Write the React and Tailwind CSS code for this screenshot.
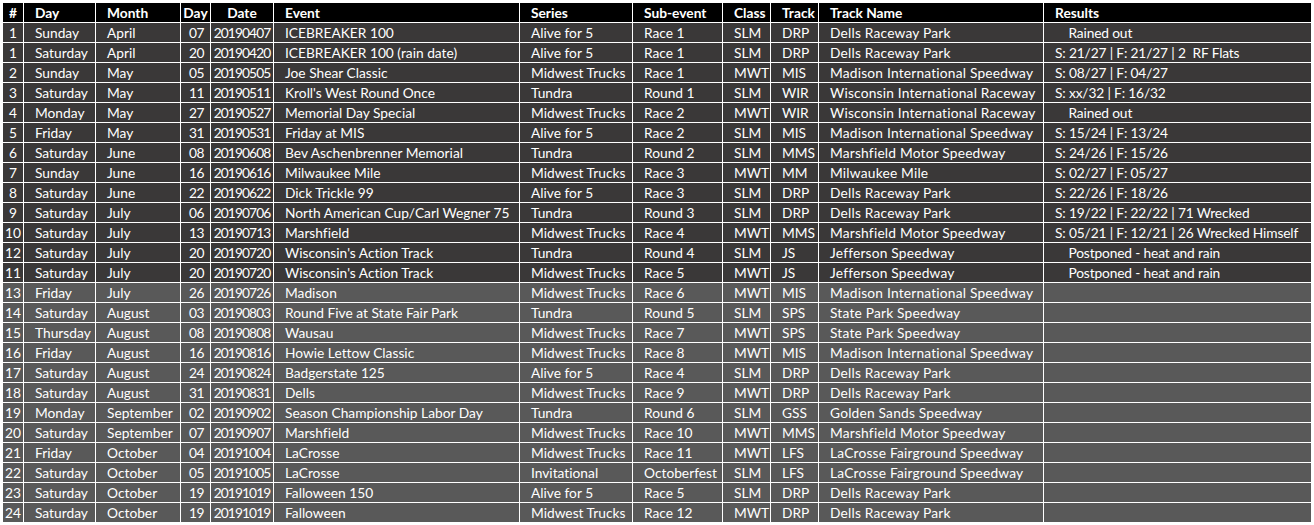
import React from "react";

const headers = ["#", "Day", "Month", "Day", "Date", "Event", "Series", "Sub-event", "Class", "Track", "Track Name", "Results"];

const DRP = ["SLM", "DRP", "Dells Raceway Park"];
const MIS = ["MWT", "MIS", "Madison International Speedway"];
const WIR = ["MWT", "WIR", "Wisconsin International Raceway"];
const MMS = ["MWT", "MMS", "Marshfield Motor Speedway"];

const rows = [
  ["1", "Sunday", "April", "07", "20190407", "ICEBREAKER 100", "Alive for 5", "Race 1", ...DRP, "    Rained out"],
  ["1", "Saturday", "April", "20", "20190420", "ICEBREAKER 100 (rain date)", "Alive for 5", "Race 1", ...DRP, "S: 21/27 | F: 21/27 | 2  RF Flats"],
  ["2", "Sunday", "May", "05", "20190505", "Joe Shear Classic", "Midwest Trucks", "Race 1", ...MIS, "S: 08/27 | F: 04/27"],
  ["3", "Saturday", "May", "11", "20190511", "Kroll's West Round Once", "Tundra", "Round 1", "SLM", "WIR", "Wisconsin International Raceway", "S: xx/32 | F: 16/32"],
  ["4", "Monday", "May", "27", "20190527", "Memorial Day Special", "Midwest Trucks", "Race 2", ...WIR, "    Rained out"],
  ["5", "Friday", "May", "31", "20190531", "Friday at MIS", "Alive for 5", "Race 2", "SLM", "MIS", "Madison International Speedway", "S: 15/24 | F: 13/24"],
  ["6", "Saturday", "June", "08", "20190608", "Bev Aschenbrenner Memorial", "Tundra", "Round 2", "SLM", "MMS", "Marshfield Motor Speedway", "S: 24/26 | F: 15/26"],
  ["7", "Sunday", "June", "16", "20190616", "Milwaukee Mile", "Midwest Trucks", "Race 3", "MWT", "MM", "Milwaukee Mile", "S: 02/27 | F: 05/27"],
  ["8", "Saturday", "June", "22", "20190622", "Dick Trickle 99", "Alive for 5", "Race 3", ...DRP, "S: 22/26 | F: 18/26"],
  ["9", "Saturday", "July", "06", "20190706", "North American Cup/Carl Wegner 75", "Tundra", "Round 3", ...DRP, "S: 19/22 | F: 22/22 | 71 Wrecked"],
  ["10", "Saturday", "July", "13", "20190713", "Marshfield", "Midwest Trucks", "Race 4", ...MMS, "S: 05/21 | F: 12/21 | 26 Wrecked Himself"],
  ["12", "Saturday", "July", "20", "20190720", "Wisconsin's Action Track", "Tundra", "Round 4", "SLM", "JS", "Jefferson Speedway", "    Postponed - heat and rain"],
  ["11", "Saturday", "July", "20", "20190720", "Wisconsin's Action Track", "Midwest Trucks", "Race 5", "MWT", "JS", "Jefferson Speedway", "    Postponed - heat and rain"],
  ["13", "Friday", "July", "26", "20190726", "Madison", "Midwest Trucks", "Race 6", ...MIS, ""],
  ["14", "Saturday", "August", "03", "20190803", "Round Five at State Fair Park", "Tundra", "Round 5", "SLM", "SPS", "State Park Speedway", ""],
  ["15", "Thursday", "August", "08", "20190808", "Wausau", "Midwest Trucks", "Race 7", "MWT", "SPS", "State Park Speedway", ""],
  ["16", "Friday", "August", "16", "20190816", "Howie Lettow Classic", "Midwest Trucks", "Race 8", ...MIS, ""],
  ["17", "Saturday", "August", "24", "20190824", "Badgerstate 125", "Alive for 5", "Race 4", ...DRP, ""],
  ["18", "Saturday", "August", "31", "20190831", "Dells", "Midwest Trucks", "Race 9", "MWT", "DRP", "Dells Raceway Park", ""],
  ["19", "Monday", "September", "02", "20190902", "Season Championship Labor Day", "Tundra", "Round 6", "SLM", "GSS", "Golden Sands Speedway", ""],
  ["20", "Saturday", "September", "07", "20190907", "Marshfield", "Midwest Trucks", "Race 10", ...MMS, ""],
  ["21", "Friday", "October", "04", "20191004", "LaCrosse", "Midwest Trucks", "Race 11", "MWT", "LFS", "LaCrosse Fairground Speedway", ""],
  ["22", "Saturday", "October", "05", "20191005", "LaCrosse", "Invitational", "Octoberfest", "SLM", "LFS", "LaCrosse Fairground Speedway", ""],
  ["23", "Saturday", "October", "19", "20191019", "Falloween 150", "Alive for 5", "Race 5", ...DRP, ""],
  ["24", "Saturday", "October", "19", "20191019", "Falloween", "Midwest Trucks", "Race 12", "MWT", "DRP", "Dells Raceway Park", ""],
];

const widths = [20, 72, 85, 30, 63, 246, 113, 90, 48, 48, 225, 268];

// per-column cell classes
const cellClass = (i) => {
  if (i === 0) return "text-center";
  if (i === 3) return "text-right pr-[6px] tracking-[-0.5px]";
  if (i === 4) return "text-center tracking-[-0.9px]";
  if (i === 10) return "pl-[11px] tracking-[0.2px]";
  if (i === 11) return "pl-[11px] tracking-[-0.15px]";
  return "pl-[11px]";
};

const headClass = (i) => {
  if (i === 0 || i === 3 || i === 4) return "text-center";
  return "pl-[11px] text-left";
};

const App = () => {
  return (
    <div className="h-[525px] w-[1314px] overflow-hidden bg-white pl-[3px] pt-[3px] font-['Lato',sans-serif] text-[13.75px] text-white [font-variant-ligatures:none]">
      <table className="w-[1308px] table-fixed border-separate border-spacing-0">
        <colgroup>
          {widths.map((w, i) => (
            <col key={i} style={{ width: w }} />
          ))}
        </colgroup>
        <thead>
          <tr className="bg-black">
            {headers.map((h, i) => (
              <th
                key={i}
                className={`h-[20px] overflow-hidden border-b border-l border-white p-0 leading-[19px] font-bold first:border-l-0 ${headClass(i)}`}
              >
                {h}
              </th>
            ))}
          </tr>
        </thead>
        <tbody>
          {rows.map((row, r) => (
            <tr key={r} className={r < 13 ? "bg-[#3a3838]" : "bg-[#595959]"}>
              {row.map((c, i) => (
                <td
                  key={i}
                  className={`h-[20px] overflow-hidden whitespace-pre border-b border-l border-white p-0 leading-[19px] first:border-l-0 ${cellClass(i)}`}
                >
                  {c}
                </td>
              ))}
            </tr>
          ))}
        </tbody>
      </table>
    </div>
  );
};

export default App;
